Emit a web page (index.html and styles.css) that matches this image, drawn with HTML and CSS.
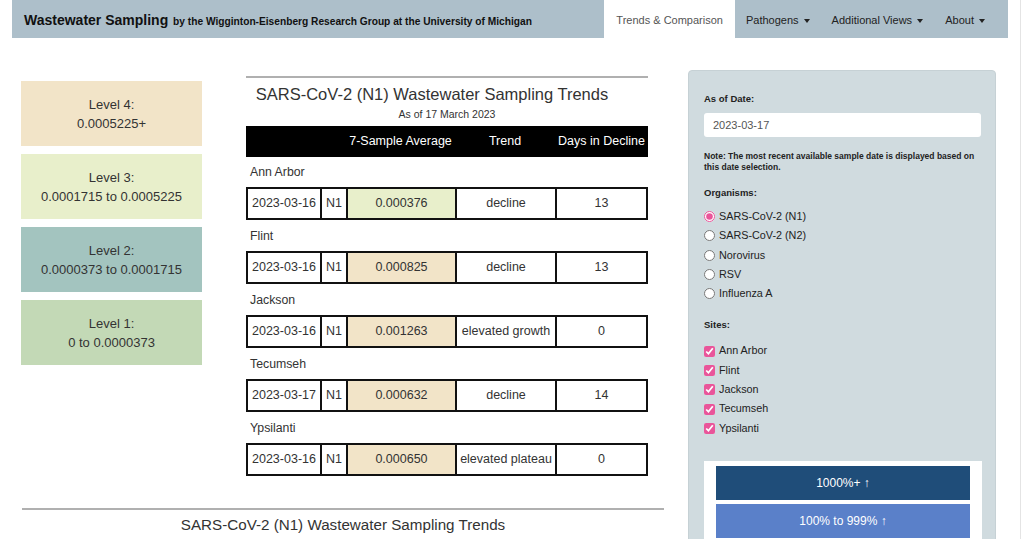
FILE: index.html
```html
<!DOCTYPE html>
<html lang="en">
<head>
    <meta charset="UTF-8">
    <meta name="viewport" content="width=device-width, initial-scale=1.0">
    <title>Wastewater Sampling</title>
    <link rel="stylesheet" href="styles.css">
</head>
<body>
<div class="page">
    <!-- top navigation -->
    <nav class="navbar">
        <div class="brand">Wastewater Sampling <span class="brand-sub">by the Wigginton-Eisenberg Research Group at the University of Michigan</span></div>
        <ul class="nav-items">
            <li class="active">Trends &amp; Comparison</li>
            <li>Pathogens <span class="caret"></span></li>
            <li>Additional Views <span class="caret"></span></li>
            <li>About <span class="caret"></span></li>
        </ul>
    </nav>

    <div class="layout">
        <main class="main">
            <div class="top-row">
                <!-- levels legend -->
                <div class="levels">
                    <div class="level level4">Level 4:<br>0.0005225+</div>
                    <div class="level level3">Level 3:<br>0.0001715 to 0.0005225</div>
                    <div class="level level2">Level 2:<br>0.0000373 to 0.0001715</div>
                    <div class="level level1">Level 1:<br>0 to 0.0000373</div>
                </div>

                <!-- trends table -->
                <section class="trends">
                    <hr class="rule">
                    <h2 class="trends-title top-title">SARS-CoV-2 (N1) Wastewater Sampling Trends</h2>
                    <div class="trends-sub">As of 17 March 2023</div>
                    <div class="head-row">
                        <span class="c-date"></span>
                        <span class="c-n"></span>
                        <span class="c-avg">7-Sample Average</span>
                        <span class="c-trend">Trend</span>
                        <span class="c-days">Days in Decline</span>
                    </div>
                    <div id="sites"></div>
                </section>
            </div>

            <section class="second">
                <hr class="rule">
                <h2 class="trends-title">SARS-CoV-2 (N1) Wastewater Sampling Trends</h2>
            </section>
        </main>

        <!-- sidebar controls -->
        <aside class="sidebar">
            <label class="ctl-label" for="asof">As of Date:</label>
            <input id="asof" class="date-input" type="text" value="2023-03-17">
            <p class="note">Note: The most recent available sample date is displayed based on this date selection.</p>

            <div class="ctl-label">Organisms:</div>
            <div class="options">
                <label class="opt"><input type="radio" name="org" checked> SARS-CoV-2 (N1)</label>
                <label class="opt"><input type="radio" name="org"> SARS-CoV-2 (N2)</label>
                <label class="opt"><input type="radio" name="org"> Norovirus</label>
                <label class="opt"><input type="radio" name="org"> RSV</label>
                <label class="opt"><input type="radio" name="org"> Influenza A</label>
            </div>

            <div class="ctl-label sites-label">Sites:</div>
            <div class="options">
                <label class="opt"><input type="checkbox" checked> Ann Arbor</label>
                <label class="opt"><input type="checkbox" checked> Flint</label>
                <label class="opt"><input type="checkbox" checked> Jackson</label>
                <label class="opt"><input type="checkbox" checked> Tecumseh</label>
                <label class="opt"><input type="checkbox" checked> Ypsilanti</label>
            </div>

            <div class="change-legend">
                <div class="chg chg1">1000%+ &#8593;</div>
                <div class="chg chg2">100% to 999% &#8593;</div>
            </div>
        </aside>
    </div>
</div>

<script>
    // rows of the trends table
    const sites = [
        ["Ann Arbor", "2023-03-16", "0.000376", "decline", "13", "l3"],
        ["Flint", "2023-03-16", "0.000825", "decline", "13", "l4"],
        ["Jackson", "2023-03-16", "0.001263", "elevated growth", "0", "l4"],
        ["Tecumseh", "2023-03-17", "0.000632", "decline", "14", "l4"],
        ["Ypsilanti", "2023-03-16", "0.000650", "elevated plateau", "0", "l4"]
    ];
    const box = document.querySelector("#sites");
    for (let s of sites){
        const name = document.createElement("div");
        name.className = "site-name";
        name.textContent = s[0];
        box.appendChild(name);
        const row = document.createElement("div");
        row.className = "site-row";
        row.innerHTML = `<span class="c-date">${s[1]}</span><span class="c-n">N1</span>` +
            `<span class="c-avg ${s[5]}">${s[2]}</span><span class="c-trend">${s[3]}</span>` +
            `<span class="c-days">${s[4]}</span>`;
        box.appendChild(row);
    }
</script>
</body>
</html>
```

FILE: styles.css
```css
body {
    margin: 0;
    font-family: "Liberation Sans", Arial, Helvetica, sans-serif;
    color: #333;
    background: #fff;
}
.page {
    width: 1020px;
    min-height: 539px;
    border-right: 1px solid #e4e4e4;
    overflow: hidden;
}

/* navbar */
.navbar {
    margin-left: 12px;
    width: 996px;
    height: 38px;
    background-color: #adbfca;
    display: flex;
    justify-content: space-between;
    align-items: stretch;
}
.brand {
    padding-left: 12px;
    font-size: 14px;
    font-weight: bold;
    color: #111;
    line-height: 40px;
}
.brand-sub {
    font-size: 10.2px;
    margin-left: 1px;
}
.nav-items {
    list-style: none;
    margin: 0;
    padding: 0 12px 0 0;
    display: flex;
}
.nav-items li {
    font-size: 11px;
    color: #222;
    line-height: 40px;
    padding: 0 11px;
}
.nav-items li.active {
    background: #fff;
    color: #555;
    padding: 0 12px;
}
.caret {
    display: inline-block;
    width: 0;
    height: 0;
    margin-left: 2px;
    vertical-align: middle;
    border-top: 4px solid #222;
    border-left: 3px solid transparent;
    border-right: 3px solid transparent;
}

/* layout */
.layout {
    margin-left: 12px;
    width: 996px;
    display: flex;
    gap: 12px;
}
.main {
    width: 664px;
}
.top-row {
    display: flex;
    padding-left: 9px;
    gap: 44px;
}
.levels {
    width: 181px;
    padding-top: 43px;
    display: flex;
    flex-direction: column;
    gap: 8px;
}
.level {
    height: 65px;
    box-sizing: border-box;
    padding-top: 14px;
    text-align: center;
    font-size: 13px;
    line-height: 19px;
    color: #333;
}
.level4 { background-color: #f2e4c8; }
.level3 { background-color: #e8efcb; }
.level2 { background-color: #a3c4bf; }
.level1 { background-color: #c3d9b6; }

/* trends */
.trends {
    width: 402px;
    padding-top: 38px;
}
.rule {
    margin: 0;
    border: none;
    border-top: 2px solid #b0b0b0;
}
.trends-title {
    margin: 6px 0 0;
    font-size: 15.2px;
    font-weight: normal;
    line-height: 20px;
    text-align: center;
    color: #333;
}
.top-title {
    font-size: 16.5px;
    padding-right: 30px;
    white-space: nowrap;
}
.trends-sub {
    font-size: 10.5px;
    text-align: center;
    line-height: 14px;
    margin-top: 3px;
    margin-bottom: 5px;
}
.head-row {
    display: grid;
    grid-template-columns: 74px 26px 109px 100px 93px;
    background: #000;
    color: #fff;
    height: 31px;
    font-size: 12.5px;
    line-height: 31px;
    text-align: center;
    white-space: nowrap;
}
.site-name {
    height: 30px;
    line-height: 30px;
    padding-left: 4px;
    font-size: 12.3px;
}
.site-row {
    display: grid;
    grid-template-columns: 72px 26px 109px 100px 91px;
    height: 33px;
    box-sizing: border-box;
    border: 2px solid #111;
    margin-bottom: 1px;
}
.site-row span {
    font-size: 12.5px;
    line-height: 29px;
    text-align: center;
    border-left: 2px solid #111;
    white-space: nowrap;
}
.site-row span:first-child {
    border-left: none;
}
.site-row .l3 { background-color: #e8efcb; }
.site-row .l4 { background-color: #f2e4c8; }

.second {
    margin-top: 31px;
    padding: 0 12px 0 10px;
}
.second .trends-title {
    margin-top: 5px;
}

/* sidebar */
.sidebar {
    width: 308px;
    box-sizing: border-box;
    margin-top: 32px;
    padding: 22px 15px 0 15px;
    background-color: #d0dbdf;
    border: 1px solid #c6d1d5;
    border-radius: 4px;
    height: 480px;
}
.ctl-label {
    display: block;
    font-size: 9.5px;
    font-weight: bold;
    color: #222;
    margin-bottom: 9px;
}
.sites-label {
    margin-bottom: 11px;
}
.date-input {
    display: block;
    width: 277px;
    height: 24px;
    box-sizing: border-box;
    border: none;
    border-radius: 3px;
    padding: 0 9px;
    font-family: inherit;
    font-size: 11px;
    color: #555;
    margin-top: 4px;
    margin-bottom: 14px;
}
.note {
    margin: 0 0 15px;
    font-size: 8.5px;
    font-weight: bold;
    line-height: 10.5px;
    color: #222;
}
.options {
    display: flex;
    flex-direction: column;
    margin-bottom: 16px;
}
.opt {
    font-size: 10.8px;
    line-height: 19.3px;
    color: #222;
    display: flex;
    align-items: center;
}
.opt input {
    margin: 0 4px 0 0;
    width: 11px;
    height: 11px;
    accent-color: #e9559a;
}
.change-legend {
    background: #fff;
    margin-top: 23px;
    width: 278px;
    box-sizing: border-box;
    padding: 5px 12px;
    display: flex;
    flex-direction: column;
    gap: 4px;
}
.chg {
    height: 34px;
    line-height: 34px;
    text-align: center;
    color: #fff;
    font-size: 12px;
}
.chg1 { background-color: #1f4d79; }
.chg2 { background-color: #5a80c9; }
```
